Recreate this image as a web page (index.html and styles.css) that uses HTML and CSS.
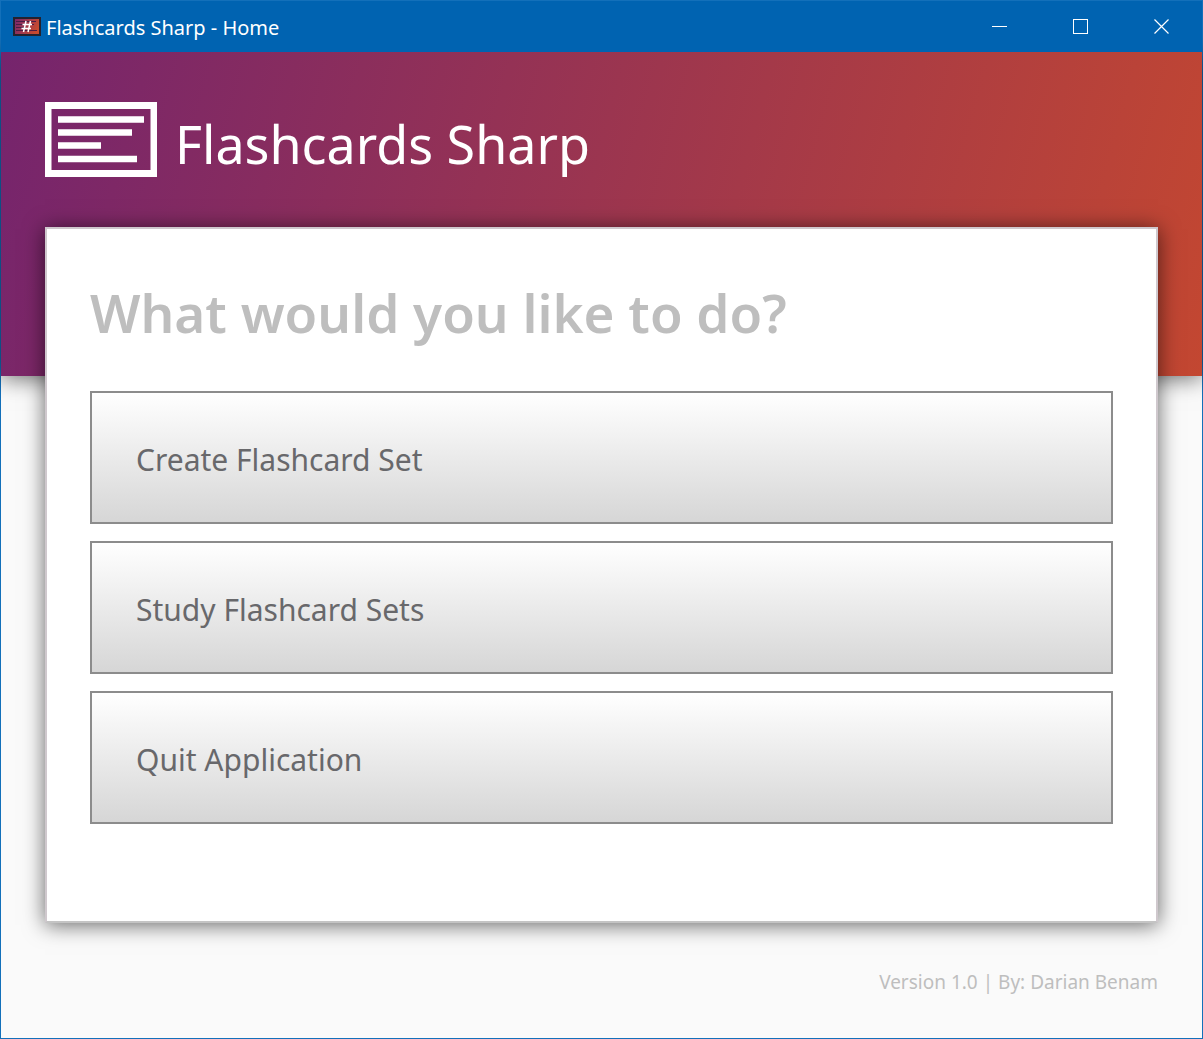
FILE: index.html
```html
<!DOCTYPE html>
<html lang="en">
<head>
<meta charset="utf-8">
<meta name="viewport" content="width=device-width, initial-scale=1">
<title>Flashcards Sharp - Home</title>
<link rel="stylesheet" href="styles.css">
</head>
<body>
<div class="window">
  <div class="titlebar">
    <svg class="app-icon" width="28" height="20" viewBox="0 0 28 20" aria-hidden="true">
      <defs>
        <linearGradient id="icon-fill" x1="0" y1="0" x2="1" y2="0.3">
          <stop offset="0" stop-color="#74256e"/>
          <stop offset="1" stop-color="#c64a30"/>
        </linearGradient>
      </defs>
      <rect x="1" y="1" width="26" height="17" fill="url(#icon-fill)" stroke="#24222f" stroke-width="2"/>
      <path d="M3 4.500h20M3 7.500h18M3 10.500h9M3 13.500h21" stroke="#4a1d44" stroke-width="1" fill="none"/>
      <path d="M13 4L10.500 15M17.500 4L15 15M9.500 7.500h9.500M8.500 11.500h9.500" stroke="#fff" stroke-width="1.500" fill="none"/>
    </svg>
    <span class="window-title">Flashcards Sharp - Home</span>
    <div class="window-controls">
      <button class="control" type="button" aria-label="Minimize">
        <svg width="15" height="15" viewBox="0 0 15 15"><path d="M0 7.500h15" stroke="#fff" fill="none"/></svg>
      </button>
      <button class="control" type="button" aria-label="Maximize">
        <svg width="15" height="15" viewBox="0 0 15 15"><rect x="0.500" y="0.500" width="14" height="14" stroke="#fff" fill="none"/></svg>
      </button>
      <button class="control" type="button" aria-label="Close">
        <svg width="15" height="15" viewBox="0 0 15 15"><path d="M0.500 0.500l14 14M14.500 0.500l-14 14" stroke="#fff" stroke-width="1.200" fill="none"/></svg>
      </button>
    </div>
  </div>
  <header class="banner">
    <svg class="logo" width="112" height="75" viewBox="0 0 112 75" aria-hidden="true">
      <rect x="3" y="3.500" width="106" height="68" fill="none" stroke="#fff" stroke-width="7"/>
      <path d="M13 17.500h86M13 30.500h74M13 43.500h43M13 57h79" stroke="#fff" stroke-width="6.500" fill="none"/>
    </svg>
    <h1 class="brand">Flashcards Sharp</h1>
  </header>
  <main class="card">
    <h2 class="question">What would you like to do?</h2>
    <div class="actions">
      <button class="action" type="button">Create Flashcard Set</button>
      <button class="action" type="button">Study Flashcard Sets</button>
      <button class="action" type="button">Quit Application</button>
    </div>
  </main>
  <footer class="credits">Version 1.0 | By: Darian Benam</footer>
</div>
</body>
</html>
```
FILE: styles.css
```css
* {
  box-sizing: border-box;
}

body {
  margin: 0;
  font-family: "Noto Sans", "Open Sans", sans-serif;
}

.window {
  display: flex;
  flex-direction: column;
  min-height: 100vh;
  border: 1px solid #1370ba;
  background: #fafafa;
}

.titlebar {
  position: relative;
  z-index: 1;
  display: flex;
  align-items: center;
  height: 51px;
  padding-left: 12px;
  background: #0063b1;
  color: #fff;
}

.window-title {
  margin-left: 5px;
  padding-top: 2px;
  font-size: 20px;
  line-height: 28px;
}

.window-controls {
  display: flex;
  align-self: stretch;
  margin-left: auto;
}

.control {
  display: flex;
  align-items: center;
  justify-content: center;
  width: 81px;
  padding: 0;
  border: 0;
  background: none;
}

.banner {
  display: flex;
  align-items: flex-start;
  gap: 18px;
  height: 324px;
  padding: 50px 44px;
  background: linear-gradient(105deg, #75246d, #c34731);
  box-shadow: 0 2px 22px rgba(0, 0, 0, 0.6);
}

.brand {
  margin: 6px 0 0;
  color: #fff;
  font-size: 52px;
  font-weight: 400;
  line-height: 72px;
}

.card {
  position: relative;
  margin: -149px 44px 0;
  padding: 44px 43px 97px;
  border: 2px solid #cfc8cd;
  border-bottom-color: #c4c4c4;
  background: #fff;
  box-shadow: 0 2px 20px rgba(0, 0, 0, 0.6);
}

.question {
  margin: 0 0 38px;
  color: #bebebe;
  font-size: 53px;
  font-weight: 600;
  line-height: 80px;
}

.actions {
  display: flex;
  flex-direction: column;
  gap: 17px;
}

.action {
  height: 133px;
  padding: 4px 44px 0;
  border: 2px solid #8c8c8c;
  background: linear-gradient(#fff, #d6d6d6);
  color: #68686b;
  font-family: inherit;
  font-size: 30px;
  line-height: 40px;
  text-align: left;
}

.credits {
  padding: 45px 44px 40px;
  color: #bebebe;
  font-size: 19px;
  line-height: 28px;
  text-align: right;
}
```
